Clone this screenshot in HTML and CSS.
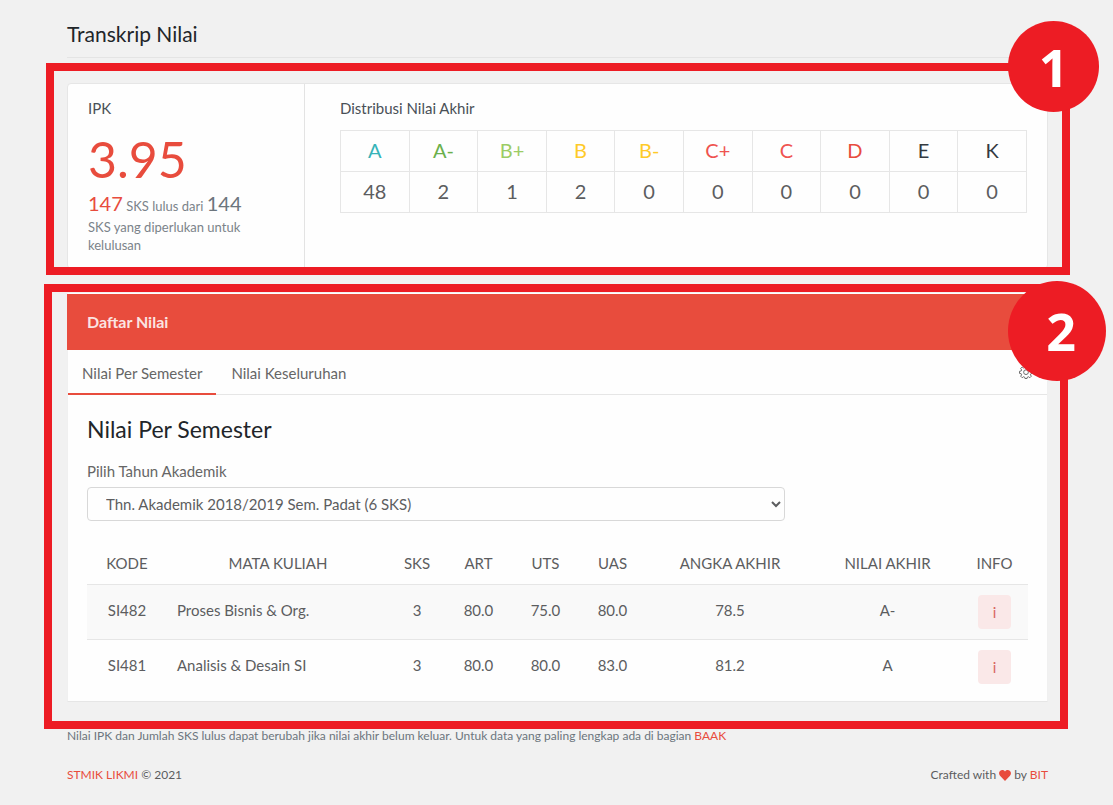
FILE: index.html
```html
<!DOCTYPE html>
<html lang="id">
<head>
<meta charset="utf-8">
<meta name="viewport" content="width=device-width, initial-scale=1">
<title>Transkrip Nilai</title>
<link rel="stylesheet" href="styles.css">
</head>
<body>
<main class="page">
  <h1 class="page-title">Transkrip Nilai</h1>

  <section class="section summary">
    <div class="card summary-card">
      <div class="gpa">
        <h2 class="label">IPK</h2>
        <p class="gpa-value">3.95</p>
        <p class="gpa-note"><span class="num red">147</span> SKS lulus dari <span class="num">144</span> SKS yang diperlukan untuk kelulusan</p>
      </div>
      <div class="distribution">
        <h2 class="label">Distribusi Nilai Akhir</h2>
        <table class="dist-table">
          <thead>
            <tr><th class="teal">A</th><th class="green">A-</th><th class="lime">B+</th><th class="yellow">B</th><th class="yellow">B-</th><th class="coral">C+</th><th class="coral">C</th><th class="red">D</th><th class="dark">E</th><th class="dark">K</th></tr>
          </thead>
          <tbody>
            <tr><td>48</td><td>2</td><td>1</td><td>2</td><td>0</td><td>0</td><td>0</td><td>0</td><td>0</td><td>0</td></tr>
          </tbody>
        </table>
      </div>
    </div>
    <div class="frame frame-one"></div>
    <span class="badge badge-one">1</span>
  </section>

  <section class="section grades">
    <div class="card grades-card">
      <h2 class="card-header">Daftar Nilai</h2>
      <nav class="tabs">
        <a class="tab active" href="#semester">Nilai Per Semester</a>
        <a class="tab" href="#semua">Nilai Keseluruhan</a>
        <button class="gear" type="button" aria-label="Pengaturan">
          <svg width="14" height="14" viewBox="0 0 16 16" fill="none" stroke="currentColor" stroke-width="1.1" stroke-linejoin="round"><path d="M6.8 1h2.4l.4 1.9 1.2.5 1.6-1.1 1.7 1.7L13 5.600l.5 1.200 1.900.4v2.400l-1.900.4-.5 1.200 1.100 1.600-1.700 1.700-1.600-1.100-1.200.5-.4 1.500H6.800l-.4-1.500-1.200-.5-1.600 1.100-1.700-1.700L3 11.200 2.500 10 .6 9.600V7.200l1.900-.4L3 5.600 1.900 4l1.700-1.700 1.600 1.100 1.200-.5z"/><circle cx="8" cy="8.200" r="2.700"/></svg>
        </button>
      </nav>
      <div class="card-body" id="semester">
        <h3 class="body-title">Nilai Per Semester</h3>
        <label class="field-label" for="tahun">Pilih Tahun Akademik</label>
        <select class="select" id="tahun"><option>Thn. Akademik 2018/2019 Sem. Padat (6 SKS)</option></select>
        <table class="grade-table">
          <colgroup><col class="w-code"><col class="w-name"><col class="w-sks"><col class="w-score"><col class="w-score"><col class="w-score"><col class="w-total"><col class="w-final"><col class="w-info"></colgroup>
          <thead>
            <tr><th>KODE</th><th>MATA KULIAH</th><th>SKS</th><th>ART</th><th>UTS</th><th>UAS</th><th>ANGKA AKHIR</th><th>NILAI AKHIR</th><th>INFO</th></tr>
          </thead>
          <tbody>
            <tr><td>SI482</td><td class="name">Proses Bisnis &amp; Org.</td><td>3</td><td>80.0</td><td>75.0</td><td>80.0</td><td>78.5</td><td>A-</td><td class="action"><button class="info" type="button">i</button></td></tr>
            <tr><td>SI481</td><td class="name">Analisis &amp; Desain SI</td><td>3</td><td>80.0</td><td>80.0</td><td>83.0</td><td>81.2</td><td>A</td><td class="action"><button class="info" type="button">i</button></td></tr>
          </tbody>
        </table>
      </div>
    </div>
    <div class="frame frame-two"></div>
    <span class="badge badge-two">2</span>
  </section>

  <p class="note">Nilai IPK dan Jumlah SKS lulus dapat berubah jika nilai akhir belum keluar. Untuk data yang paling lengkap ada di bagian <a href="#baak">BAAK</a></p>

  <footer class="footer">
    <span><a href="#likmi">STMIK LIKMI</a> © 2021</span>
    <span>Crafted with <svg class="heart" width="12" height="11" viewBox="0 0 12 11" fill="currentColor"><path d="M6 11 1 5.800C-.4 4.200-.2 1.800 1.300.7 2.800-.3 4.800 0 6 1.600 7.200 0 9.200-.3 10.700.7c1.500 1.100 1.700 3.500.3 5.100z"/></svg> by <a href="#bit">BIT</a></span>
  </footer>
</main>
</body>
</html>
```
FILE: styles.css
```css
* { box-sizing: border-box; }

body {
  margin: 0;
  background: #f1f1f1;
  color: #5c5d5f;
  font: 15px/20px Lato, "Open Sans", sans-serif;
}

h1, h2, h3, p { margin: 0; font-weight: 400; }
a { color: #e84c3d; text-decoration: none; }

.page { padding: 19px 65px 0 67px; }

.page-title {
  padding-bottom: 8px;
  border-bottom: 1px solid #e4e4e4;
  color: #212529;
  font-size: 21px;
  line-height: 30px;
}

.section { position: relative; }
.summary { margin-top: 25px; }
.grades { margin-top: 24px; }

.card { background: #fefefe; border: 1px solid #e6e6e6; }

.summary-card { display: flex; border-radius: 4px; }
.gpa {
  flex: 0 0 237px;
  padding: 14px 50px 14px 20px;
  border-right: 1px solid #e3e3e3;
}
.distribution { flex: 1; min-width: 0; padding: 14px 20px 15px 35px; }
.label { color: #495057; font-size: 15px; line-height: 20px; }
.gpa-value { margin-top: 11px; color: #e84c3d; font-size: 50px; line-height: 60px; }
.gpa-note { color: #7b838a; font-size: 13px; line-height: 18px; }
.num { color: #6c757d; font-size: 20px; line-height: 29px; }

.red, .num.red { color: #e84c3d; }
.teal { color: #36b3b8; }
.green { color: #6ab04c; }
.lime { color: #9ccc65; }
.yellow { color: #ffca28; }
.coral { color: #ef5350; }
.dark { color: #343a40; }

.dist-table {
  width: 100%;
  margin-top: 12px;
  border-collapse: collapse;
  table-layout: fixed;
  text-align: center;
  font-size: 20px;
}
.dist-table th, .dist-table td {
  height: 41px;
  padding: 0 0 2px;
  border: 1px solid #e6e6e6;
  font-weight: 400;
}

.grades-card { border-color: #fefefe #f0f0f0 #e6e6e6; }
.card-header {
  margin: 0 -1px;
  padding: 18px 20px;
  background: #e84c3d;
  color: #fbe4e2;
  font-size: 16px;
  font-weight: 700;
  line-height: 20px;
}

.tabs { display: flex; border-bottom: 1px solid #e6e6e6; }
.tab {
  margin: 0 1px -1px 0;
  padding: 13px 14px 10px;
  border-bottom: 2px solid transparent;
  color: #666;
}
.tab.active { border-color: #e84c3d; }
.gear {
  display: flex;
  align-items: center;
  margin: 0 14px 0 auto;
  padding: 0;
  border: 0;
  background: none;
  color: #666;
}

.card-body { padding: 19px 19px 7px; }
.body-title { color: #212529; font-size: 23px; line-height: 30px; }
.field-label { display: block; margin: 17px 0 6px; color: #666; }
.select {
  display: block;
  width: 100%;
  max-width: 698px;
  height: 34px;
  padding: 0 14px;
  border: 1px solid #d8d8d8;
  border-radius: 4px;
  background: #fefefe;
  color: #5c5d5f;
  font: inherit;
}

.grade-table {
  width: 100%;
  margin-top: 21px;
  border-collapse: collapse;
  table-layout: fixed;
  text-align: center;
}
.w-code { width: 80px; }
.w-name { width: 222px; }
.w-sks { width: 56px; }
.w-score { width: 67px; }
.w-total { width: 168px; }
.w-final { width: 147px; }
.w-info { width: 67px; }
.grade-table th { height: 42px; padding: 0; font-weight: 400; }
.grade-table td { height: 55px; padding: 0 0 3px; border-top: 1px solid #e6e6e6; }
.grade-table .name { padding-left: 10px; text-align: left; }
.grade-table .action { padding: 0; }
.grade-table tbody tr:nth-child(odd) { background: #f9f9f9; }
.info {
  display: block;
  width: 33px;
  height: 34px;
  margin: 0 auto;
  padding: 0;
  border: 0;
  border-radius: 4px;
  background: #fae8e8;
  color: #d9665f;
  font: inherit;
}

/* Numbered callouts laid over the two sections */
.frame { position: absolute; border: 8px solid #ed1c24; pointer-events: none; }
.frame-one { inset: -20px -22px -6px -21px; }
.frame-two { inset: -9px -20px -27px -23px; }
.badge {
  position: absolute;
  z-index: 1;
  display: flex;
  align-items: center;
  justify-content: center;
  border-radius: 50%;
  background: #ed1c24;
  color: #fff;
  font: 700 52px/1 "Open Sans", "Noto Sans", sans-serif;
}
.badge-one { top: -62px; right: -51px; width: 91px; height: 91px; }
.badge-two { top: -12px; right: -58px; width: 98px; height: 100px; padding-left: 8px; }

.note { margin-top: 24px; color: #6c757d; font-size: 12px; }
.footer {
  display: flex;
  justify-content: space-between;
  margin-top: 19px;
  padding-bottom: 20px;
  font-size: 12px;
}
.heart { color: #e84c3d; vertical-align: -2px; }
```
